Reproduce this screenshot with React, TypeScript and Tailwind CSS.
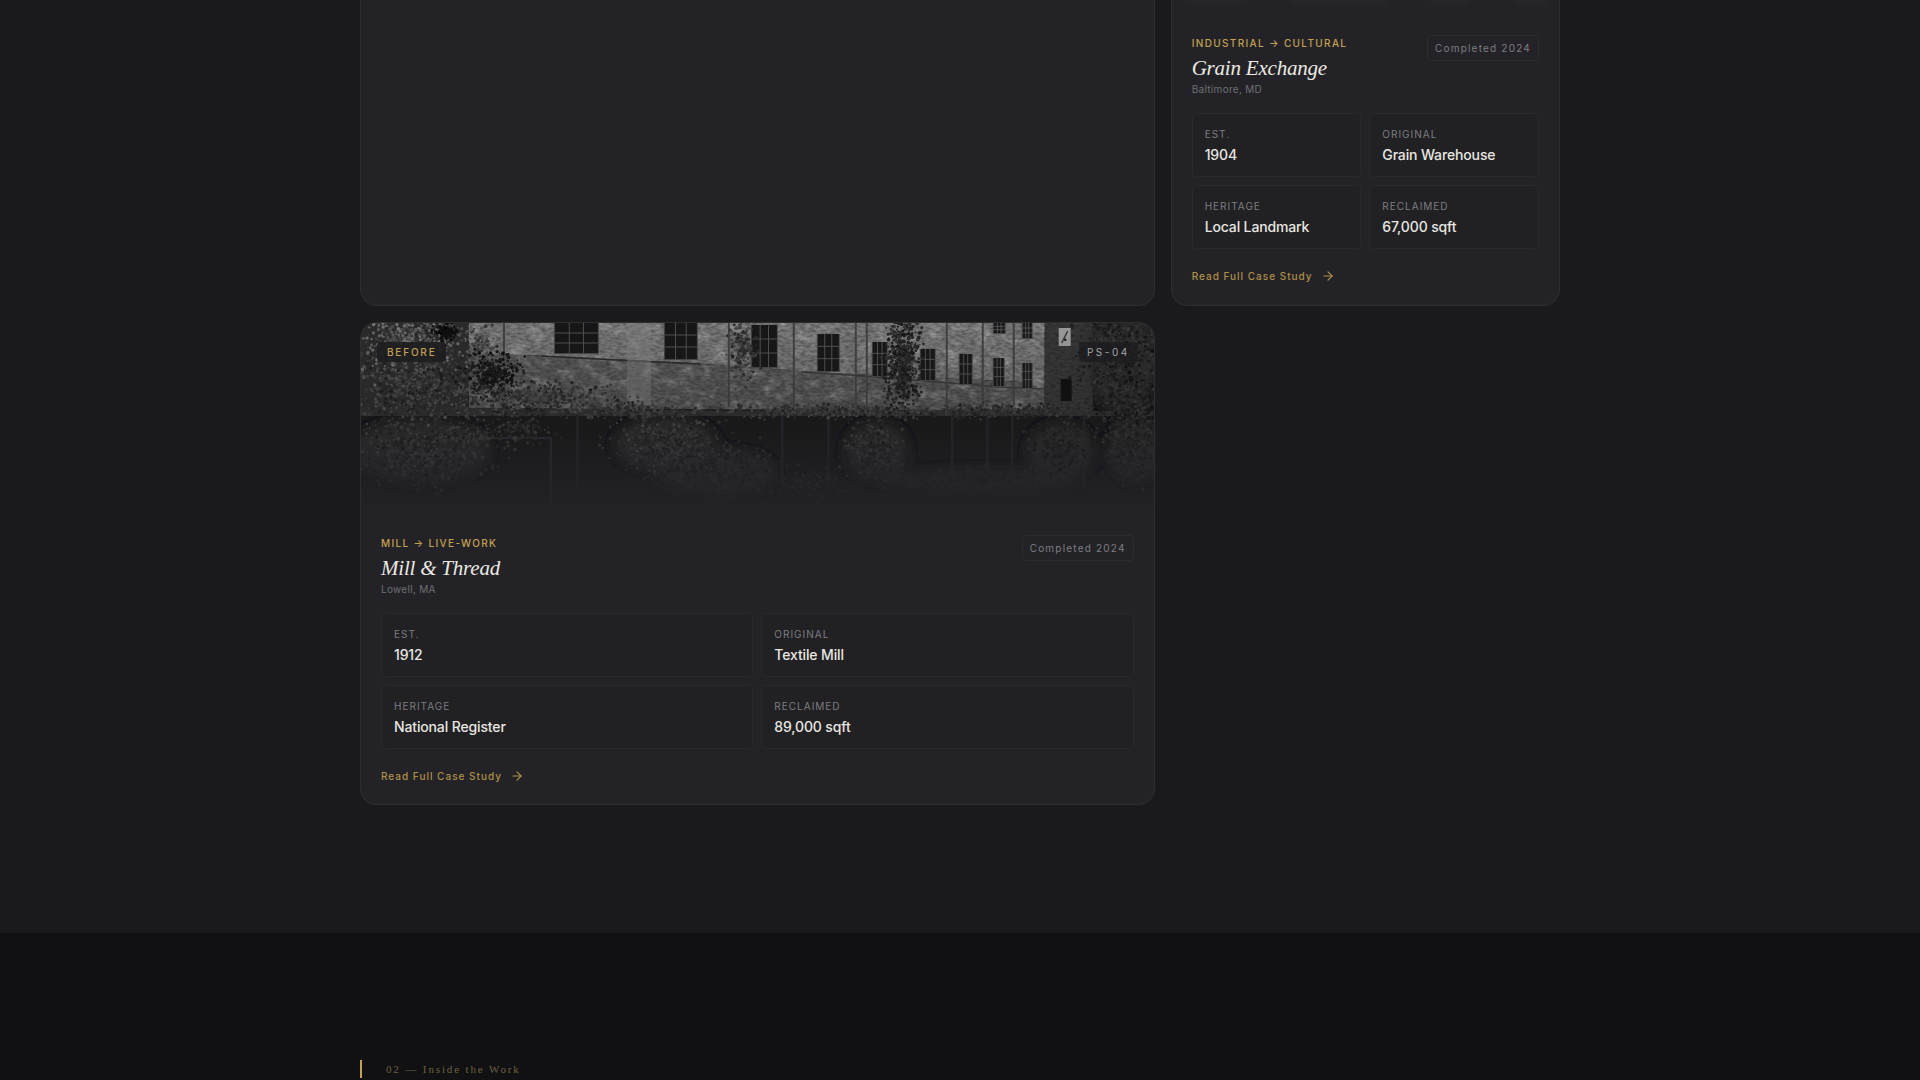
import { ArrowRight } from 'lucide-react'

const sans = 'font-["Inter","Liberation_Sans",sans-serif]'

function makeRandom(seed: number) {
  let s = seed
  return () => {
    s = (s + 0x6d2b79f5) | 0
    let t = Math.imul(s ^ (s >>> 15), 1 | s)
    t = (t + Math.imul(t ^ (t >>> 7), 61 | t)) ^ t
    return ((t ^ (t >>> 14)) >>> 0) / 4294967296
  }
}

type Leaf = { x: number; y: number; r: number; g: number }

const rand = makeRandom(41)

// scatter leaves round a centre, thick in the middle and thin at the edge
function cluster(cx: number, cy: number, rx: number, ry: number, n: number, lo: number, hi: number): Leaf[] {
  const out: Leaf[] = []
  for (let i = 0; i < n; i++) {
    const a = rand() * Math.PI * 2
    const d = rand() * (0.45 + 0.85 * rand())
    const g = Math.round(lo + (hi - lo) * rand())
    out.push({ x: cx + Math.cos(a) * d * rx, y: cy + Math.sin(a) * d * ry, r: 0.8 + rand() * 1.1, g })
  }
  return out
}

const backFoliage: Leaf[] = [
  ...cluster(50, 15, 75, 45, 900, 34, 122),
  ...cluster(118, 22, 22, 24, 140, 40, 110),
  ...cluster(55, 65, 80, 38, 900, 24, 84),
  ...cluster(85, 9, 14, 10, 120, 6, 18),
  ...cluster(133, 50, 34, 24, 420, 10, 36),
  ...cluster(175, 76, 95, 18, 800, 28, 92),
  ...cluster(270, 88, 70, 9, 300, 32, 80),
  ...cluster(470, 88, 130, 8, 520, 34, 80),
  ...cluster(640, 88, 110, 8, 420, 28, 66),
  ...cluster(762, 30, 48, 60, 1200, 16, 60),
  ...cluster(770, 88, 40, 50, 700, 16, 56),
  ...cluster(542, 38, 19, 54, 850, 18, 58),
  ...cluster(382, 26, 16, 38, 220, 34, 80),
  ...cluster(160, 104, 36, 20, 220, 20, 60),
]

const frontFoliage: Leaf[] = [
  ...cluster(60, 128, 75, 38, 1000, 22, 70),
  ...cluster(110, 116, 38, 18, 240, 26, 68),
  ...cluster(305, 120, 58, 34, 800, 26, 74),
  ...cluster(340, 145, 50, 28, 500, 24, 58),
  ...cluster(385, 150, 38, 32, 340, 24, 54),
  ...cluster(516, 126, 36, 36, 540, 24, 64),
  ...cluster(450, 160, 42, 18, 220, 24, 48),
  ...cluster(700, 126, 36, 32, 420, 20, 50),
  ...cluster(775, 128, 30, 34, 420, 22, 54),
  ...cluster(620, 156, 95, 14, 380, 24, 44),
]

// soft dark masses that sit under the leaves, so the bushes read as one shape
const bushes = [
  [60, 128, 70, 32],
  [305, 122, 52, 28],
  [355, 150, 60, 24],
  [516, 128, 32, 30],
  [700, 128, 34, 28],
  [775, 128, 28, 32],
  [620, 158, 100, 12],
  [762, 35, 36, 55],
  [40, 40, 70, 40],
]

const windows = [
  [194, 0, 43, 30],
  [304, 0, 32, 36],
  [391, 2, 25, 42],
  [457, 11, 21, 37],
  [512, 19, 14, 34],
  [560, 26, 14, 31],
  [599, 31, 12, 30],
  [633, 35, 10, 28],
  [662, 40, 9, 25],
  [633, 0, 11, 10],
  [662, 0, 9, 15],
]

const pilasters = [142, 367, 432, 494, 505, 585, 621, 652]
const pillars = [72, 215, 420, 466, 590, 625, 650, 722]

function Leaves({ items }: { items: Leaf[] }) {
  return (
    <>
      {items.map((l, i) => (
        <circle key={i} cx={l.x.toFixed(1)} cy={l.y.toFixed(1)} r={l.r.toFixed(1)} fill={`rgb(${l.g},${l.g},${l.g})`} />
      ))}
    </>
  )
}

function MillPhoto() {
  return (
    <svg viewBox="0 0 793 192" preserveAspectRatio="none" className="block h-full w-full">
      <defs>
        <filter id="grit" x="0" y="0" width="100%" height="100%">
          <feTurbulence type="fractalNoise" baseFrequency="0.2 0.4" numOctaves="2" seed="7" />
          <feColorMatrix values="0 0 0 0 0  0 0 0 0 0  0 0 0 0 0  1.5 0 0 0 -0.55" />
        </filter>
        <filter id="patches" x="0" y="0" width="100%" height="100%">
          <feTurbulence type="fractalNoise" baseFrequency="0.06 0.09" numOctaves="3" seed="12" />
          <feColorMatrix values="0 0 0 0 0.78  0 0 0 0 0.78  0 0 0 0 0.78  2 0 0 0 -0.95" />
        </filter>
        <filter id="soft">
          <feGaussianBlur stdDeviation="0.55" />
        </filter>
        <filter id="mass" x="-20%" y="-20%" width="140%" height="140%">
          <feGaussianBlur stdDeviation="6" />
        </filter>
      </defs>
      <g filter="url(#soft)">
        <rect width="793" height="192" fill="#121214" />
        <rect width="110" height="90" fill="#2b2b2b" />
        {/* front wall: render above the sill line, brick below it */}
        <polygon points="108,0 684,0 684,60 470,50 330,40 190,33 108,30" fill="#787878" />
        <polygon points="108,30 190,33 330,40 470,50 684,60 684,88 108,85" fill="#5a5a5a" />
        <rect x="108" width="576" height="88" filter="url(#patches)" opacity="0.45" />
        <rect x="108" width="576" height="88" filter="url(#grit)" opacity="0.45" />
        <polyline points="180,33 275,38 340,41" fill="none" stroke="#2a2a2a" strokeWidth="1.5" />
        <polyline points="440,49 490,52 640,64 684,66" fill="none" stroke="#383838" strokeWidth="1.5" />
        {pilasters.map((x) => (
          <rect key={x} x={x} y="0" width="2" height="84" fill="#404040" />
        ))}
        <rect x="266" width="24" height="82" fill="#828282" opacity="0.45" />
        {/* tower at the end of the block */}
        <rect x="684" width="48" height="90" fill="#383838" />
        <rect x="684" width="48" height="90" filter="url(#grit)" opacity="0.4" />
        <rect x="698" y="5" width="12" height="18" fill="#9a9a9a" />
        <path d="M701 20 L707 8" stroke="#3a3a3a" strokeWidth="1.5" />
        <rect x="700" y="56" width="11" height="22" fill="#101010" />
        {windows.map(([x, y, w, h]) => (
          <g key={`${x}-${y}`}>
            <rect x={x - 1} y={y} width={w + 2} height={h + 1} fill="#4a4a4a" />
            <rect x={x} y={y} width={w} height={h} fill="#161617" />
            <path
              d={`M${x + w / 3} ${y}V${y + h}M${x + (2 * w) / 3} ${y}V${y + h}M${x} ${y + h / 3}H${x + w}M${x} ${y + (2 * h) / 3}H${x + w}`}
              stroke="#585858"
              strokeWidth="0.9"
            />
          </g>
        ))}
        {/* canopy and the posts below it */}
        <polygon points="110,85 400,88 793,88 793,93 0,93 0,86" fill="#2e2e2e" />
        {pillars.map((x) => (
          <rect key={x} x={x} y="92" width="3" height="72" fill="#232325" />
        ))}
        <path d="M85 115H190V180" fill="none" stroke="#2c2c2e" strokeWidth="2.5" />
        <g filter="url(#mass)">
          {bushes.map(([cx, cy, rx, ry]) => (
            <ellipse key={`${cx}-${cy}`} cx={cx} cy={cy} rx={rx} ry={ry} fill="#2a2a2a" />
          ))}
        </g>
        <Leaves items={backFoliage} />
        <Leaves items={frontFoliage} />
      </g>
    </svg>
  )
}

function Stat({ label, value }: { label: string; value: string }) {
  return (
    <div className="h-[64px] rounded border border-[#29292c] bg-[#212124] px-3 pt-[13px]">
      <div className="text-[10px] leading-[14px] tracking-[0.1em] text-[#7d7d80] uppercase">{label}</div>
      <div className="mt-[3px] text-[14px] leading-[22px] font-medium tracking-[-0.01em] text-[#e8e6e1]">{value}</div>
    </div>
  )
}

type Project = {
  category: string
  title: string
  place: string
  stats: [string, string][]
}

function CardBody({ project }: { project: Project }) {
  return (
    <div className="p-5">
      <div className="flex items-start justify-between">
        <div>
          <div className="text-[10px] leading-4 font-medium tracking-[0.135em] text-[#c4a052] uppercase">{project.category}</div>
          <h3 className='mt-1 font-["Liberation_Serif",serif] text-[21px] leading-[26px] font-normal tracking-[-0.01em] text-[#ece9e3] italic'>
            {project.title}
          </h3>
          <div className="text-[10px] leading-4 tracking-[0.03em] text-[#6f6f72]">{project.place}</div>
        </div>
        <div className="rounded-sm border border-[#2c2c30] px-[7px] py-[5px] text-[10px] leading-[14px] tracking-[0.12em] text-[#7d7d80]">
          Completed 2024
        </div>
      </div>
      <div className="mt-4 grid grid-cols-2 gap-2">
        {project.stats.map(([label, value]) => (
          <Stat key={label} label={label} value={value} />
        ))}
      </div>
      <a className="mt-[19px] flex items-center gap-2 text-[10px] leading-4 font-medium tracking-[0.1em] text-[#b08f47]">
        Read Full Case Study
        <ArrowRight size={14} strokeWidth={2} />
      </a>
    </div>
  )
}

const grain: Project = {
  category: 'Industrial → Cultural',
  title: 'Grain Exchange',
  place: 'Baltimore, MD',
  stats: [
    ['Est.', '1904'],
    ['Original', 'Grain Warehouse'],
    ['Heritage', 'Local Landmark'],
    ['Reclaimed', '67,000 sqft'],
  ],
}

const mill: Project = {
  category: 'Mill → Live-Work',
  title: 'Mill & Thread',
  place: 'Lowell, MA',
  stats: [
    ['Est.', '1912'],
    ['Original', 'Textile Mill'],
    ['Heritage', 'National Register'],
    ['Reclaimed', '89,000 sqft'],
  ],
}

const cardClass = 'overflow-hidden rounded-2xl border border-[#2e2e32] bg-[#232327]'

export default function App() {
  return (
    <div className={`h-screen overflow-hidden bg-[#111113] ${sans}`}>
      {/* the page is scrolled: the first row starts above the top of the window */}
      <section className="-mt-[178px] bg-[#1a1a1c] pb-32">
        <div className="mx-auto grid w-[1200px] grid-cols-3 gap-4">
          <div className={`col-span-2 h-[483.5px] ${cardClass}`} />
          <div className={`h-[483.5px] ${cardClass}`}>
            <div className="relative h-[192px] bg-[#232327]">
              <div className="absolute inset-x-3 bottom-[10px] flex h-2 justify-between opacity-30 blur-[2px]">
                <div className="h-2 w-16 bg-[#2e2e32]" />
                <div className="h-2 w-24 bg-[#2e2e32]" />
                <div className="h-2 w-10 bg-[#2e2e32]" />
                <div className="h-2 w-8 bg-[#2e2e32]" />
              </div>
            </div>
            <CardBody project={grain} />
          </div>
          <div className={`col-span-2 h-[483.5px] ${cardClass}`}>
            <div className="relative h-[192px]">
              <MillPhoto />
              <div className="absolute inset-0 bg-gradient-to-t from-[#232327] via-[#232327]/25 via-45% to-transparent" />
              <div className="absolute top-[19px] left-4 rounded-sm bg-[#1d1d20]/90 px-[10px] py-[3px] text-[10px] leading-[14px] font-medium tracking-[0.18em] text-[#c4a052]">
                BEFORE
              </div>
              <div className="absolute top-[19px] right-4 rounded-sm bg-[#1d1d20]/80 px-2 py-[3px] text-[10px] leading-[14px] tracking-[0.25em] text-[#a5a5a5]">
                PS-04
              </div>
            </div>
            <CardBody project={mill} />
          </div>
        </div>
      </section>
      <section className="pt-[127px]">
        <div className="mx-auto w-[1200px]">
          <div className='border-l-2 border-[#c4a052] pl-6 font-["Liberation_Serif",serif] text-[11px] leading-[18px] tracking-[0.17em] text-[#6f6140]'>
            02 — Inside the Work
          </div>
        </div>
      </section>
    </div>
  )
}
